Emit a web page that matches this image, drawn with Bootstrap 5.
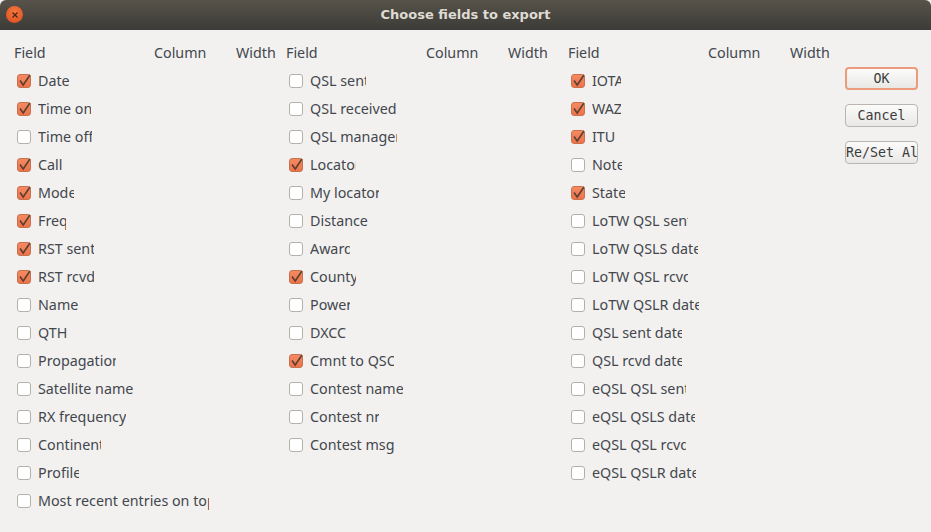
<!DOCTYPE html>
<html lang="en">
<head>
  <meta charset="UTF-8" />
  <meta name="viewport" content="width=device-width, initial-scale=1.0" />
  <title>Choose fields to export</title>
  <link href="https://cdn.jsdelivr.net/npm/bootstrap@5.3.0/dist/css/bootstrap.min.css" rel="stylesheet" />
  <style>
    body {
      background: #f2f1f0;
      color: #43474d;
      font-family: "Noto Sans", "Open Sans", sans-serif;
      font-size: 14.3px;
      height: 532px;
      overflow: hidden;
    }
    .title-bar {
      height: 30px;
      background: linear-gradient(#57534a, #3c3b37);
      border-radius: 6px 6px 0 0;
      color: #dfdbd2;
      font-family: "DejaVu Sans", sans-serif;
      font-size: 13px;
      font-weight: 700;
    }
    .close-dot {
      left: 6px;
      top: 6px;
      width: 17px;
      height: 17px;
      border-radius: 50%;
      background: radial-gradient(circle at 50% 35%, #f4793f, #dc4a1a);
    }
    .field-group {
      display: grid;
      grid-template-columns: 140px 82px auto;
      padding-top: 8px;
    }
    .group-a { width: 272px; margin-left: 14px; }
    .group-b { width: 282px; }
    .group-c { width: 277px; }
    .head-row { height: 29px; line-height: 19px; padding-top: 5px; }
    .field-row {
      grid-column: 1 / -1;
      height: 28px;
      padding-left: 3px;
    }
    .tick {
      flex: none;
      width: 14px;
      height: 14px;
      border: 1px solid #b3b0ab;
      border-radius: 3px;
      background: #fff;
    }
    .tick.on {
      border-color: #c9704e;
      background: linear-gradient(#f48a62, #ee7347);
    }
    .tick svg { display: block; overflow: visible; }
    .field-name {
      margin-left: 7px;
      overflow: hidden;
      white-space: nowrap;
    }
    .button-col { width: 73px; margin-top: 37px; gap: 14px; }
    .gtk-btn {
      height: 23px;
      width: 73px;
      padding: 0;
      border: 1px solid #b9b6b1;
      border-radius: 4px;
      background: linear-gradient(#fbfbfa, #e9e8e6);
      color: #3c3c3c;
      font-family: "DejaVu Sans Mono", monospace;
      font-size: 13.3px;
      line-height: 21px;
      overflow: hidden;
      white-space: nowrap;
      text-align: center;
    }
    .gtk-btn.is-default { border: 2px solid #eb9c7c; line-height: 19px; }
  </style>
</head>
<body>
  <div class="title-bar position-relative d-flex align-items-center justify-content-center">
    <span class="close-dot position-absolute d-flex align-items-center justify-content-center">
      <svg width="8" height="8" viewBox="0 0 8 8"><path d="M1.5 1.5l5 5M6.5 1.5l-5 5" stroke="#4a2414" stroke-width="1.2"/></svg>
    </span>
    Choose fields to export
  </div>
  <div class="d-flex">
    <div id="groupA" class="field-group group-a align-content-start"></div>
    <div id="groupB" class="field-group group-b align-content-start"></div>
    <div id="groupC" class="field-group group-c align-content-start"></div>
    <div class="button-col d-flex flex-column">
      <button class="gtk-btn is-default" type="button">OK</button>
      <button class="gtk-btn" type="button">Cancel</button>
      <button class="gtk-btn" type="button">Re/Set All</button>
    </div>
  </div>

  <script>
    // name, checked, visible label width (the dialog clips the labels)
    const groups = {
      groupA: [
        ['Date', 1, 0], ['Time on', 1, 53], ['Time off', 0, 54], ['Call', 1, 0],
        ['Mode', 1, 36], ['Freq', 1, 28], ['RST sent', 1, 56], ['RST rcvd', 1, 56],
        ['Name', 0, 0], ['QTH', 0, 0], ['Propagation', 0, 78], ['Satellite name', 0, 96],
        ['RX frequency', 0, 88], ['Continent', 0, 63], ['Profile', 0, 41],
        ['Most recent entries on top', 0, 171]
      ],
      groupB: [
        ['QSL sent', 0, 56], ['QSL received', 0, 86], ['QSL manager', 0, 87], ['Locator', 1, 46],
        ['My locator', 0, 69], ['Distance', 0, 0], ['Award', 0, 40], ['County', 1, 46],
        ['Power', 0, 40], ['DXCC', 0, 0], ['Cmnt to QSO', 1, 84], ['Contest name', 0, 93],
        ['Contest nr', 0, 69], ['Contest msg', 0, 84]
      ],
      groupC: [
        ['IOTA', 1, 29], ['WAZ', 1, 29], ['ITU', 1, 0], ['Note', 0, 30], ['State', 1, 33],
        ['LoTW QSL sent', 0, 96], ['LoTW QSLS date', 0, 106], ['LoTW QSL rcvd', 0, 96],
        ['LoTW QSLR date', 0, 107], ['QSL sent date', 0, 90], ['QSL rcvd date', 0, 90],
        ['eQSL QSL sent', 0, 94], ['eQSL QSLS date', 0, 103], ['eQSL QSL rcvd', 0, 94],
        ['eQSL QSLR date', 0, 104]
      ]
    };

    const tickMark = '<svg width="12" height="12" viewBox="0 0 12 12"><path d="M2 5.5l3.2 4.5L12 0" fill="none" stroke="#5f4034" stroke-width="1.7"/></svg>';

    Object.keys(groups).forEach(id => {
      let html = '<div class="head-row">Field</div><div class="head-row">Column</div><div class="head-row">Width</div>';
      groups[id].forEach(([name, on, clip]) => {
        const width = clip ? `style="width:${clip}px"` : '';
        html += `
          <div class="field-row d-flex align-items-center">
            <span class="tick ${on ? 'on' : ''}">${on ? tickMark : ''}</span>
            <span class="field-name" ${width}>${name}</span>
          </div>`;
      });
      document.getElementById(id).innerHTML = html;
    });
  </script>
</body>
</html>
